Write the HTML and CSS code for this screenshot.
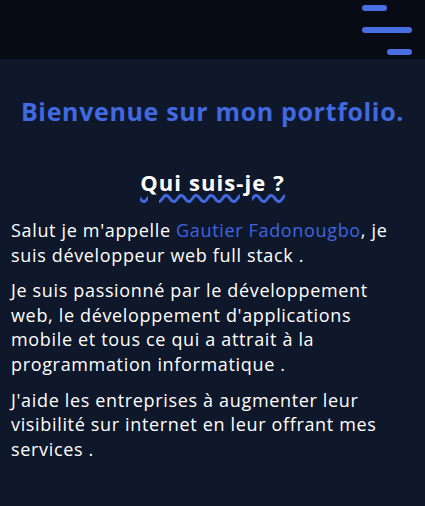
FILE: index.html
```html
<!DOCTYPE html>
<html lang="fr">
<head>
<meta charset="utf-8">
<title>Portfolio</title>
<link rel="stylesheet" href="styles.css">
</head>
<body>
<header class="topbar">
  <button class="burger" aria-label="Menu">
    <span class="bar bar-top"></span>
    <span class="bar bar-mid"></span>
    <span class="bar bar-bot"></span>
  </button>
</header>
<main class="content">
  <h1 class="welcome">Bienvenue sur mon portfolio.</h1>
  <section class="about">
    <h2 class="about-title"><span class="wavy">Qui suis-je ?</span></h2>
    <p class="text">Salut je m'appelle <a class="name" href="#">Gautier Fadonougbo</a>, je suis développeur web full stack .</p>
    <p class="text">Je suis passionné par le développement web, le développement d'applications mobile et tous ce qui a attrait à la programmation informatique .</p>
    <p class="text">J'aide les entreprises à augmenter leur visibilité sur internet en leur offrant mes services .</p>
  </section>
</main>
</body>
</html>
```
FILE: styles.css
```css
* { box-sizing: border-box; }
html, body {
  margin: 0;
  padding: 0;
  background: #0f172a;
  height: 100%;
}
body {
  font-family: "Open Sans", "DejaVu Sans", sans-serif;
  color: #ffffff;
}
.topbar {
  height: 59px;
  background: #060b16;
  display: flex;
  justify-content: flex-end;
  padding: 5px 13px 0 0;
}
.burger {
  background: none;
  border: 0;
  padding: 0;
  width: 50px;
  display: flex;
  flex-direction: column;
  gap: 16px;
  cursor: pointer;
}
.bar {
  display: block;
  height: 6px;
  border-radius: 3px;
  background: #4a6fe3;
}
.bar-top { width: 25px; align-self: flex-start; }
.bar-mid { width: 50px; }
.bar-bot { width: 25px; align-self: flex-end; }

.content {
  padding: 37px 11px 0 11px;
}
.welcome {
  margin: 0;
  text-align: center;
  font-size: 25px;
  line-height: 30px;
  font-weight: 700;
  letter-spacing: 0.65px;
  color: #4169e1;
}
.about {
  margin-top: 42px;
}
.about-title {
  margin: 0 0 22px 0;
  text-align: center;
  font-size: 22px;
  line-height: 28px;
  font-weight: 700;
  letter-spacing: 1.1px;
  color: #ffffff;
}
.wavy {
  text-decoration: underline wavy #4169e1;
  text-decoration-thickness: 2.5px;
  text-underline-offset: 3px;
}
.text {
  margin: 0 0 11px 0;
  font-size: 18px;
  line-height: 24.6px;
  letter-spacing: 0.66px;
  padding-right: 12px;
}
.name {
  color: #3f64e0;
  text-decoration: none;
}
```
